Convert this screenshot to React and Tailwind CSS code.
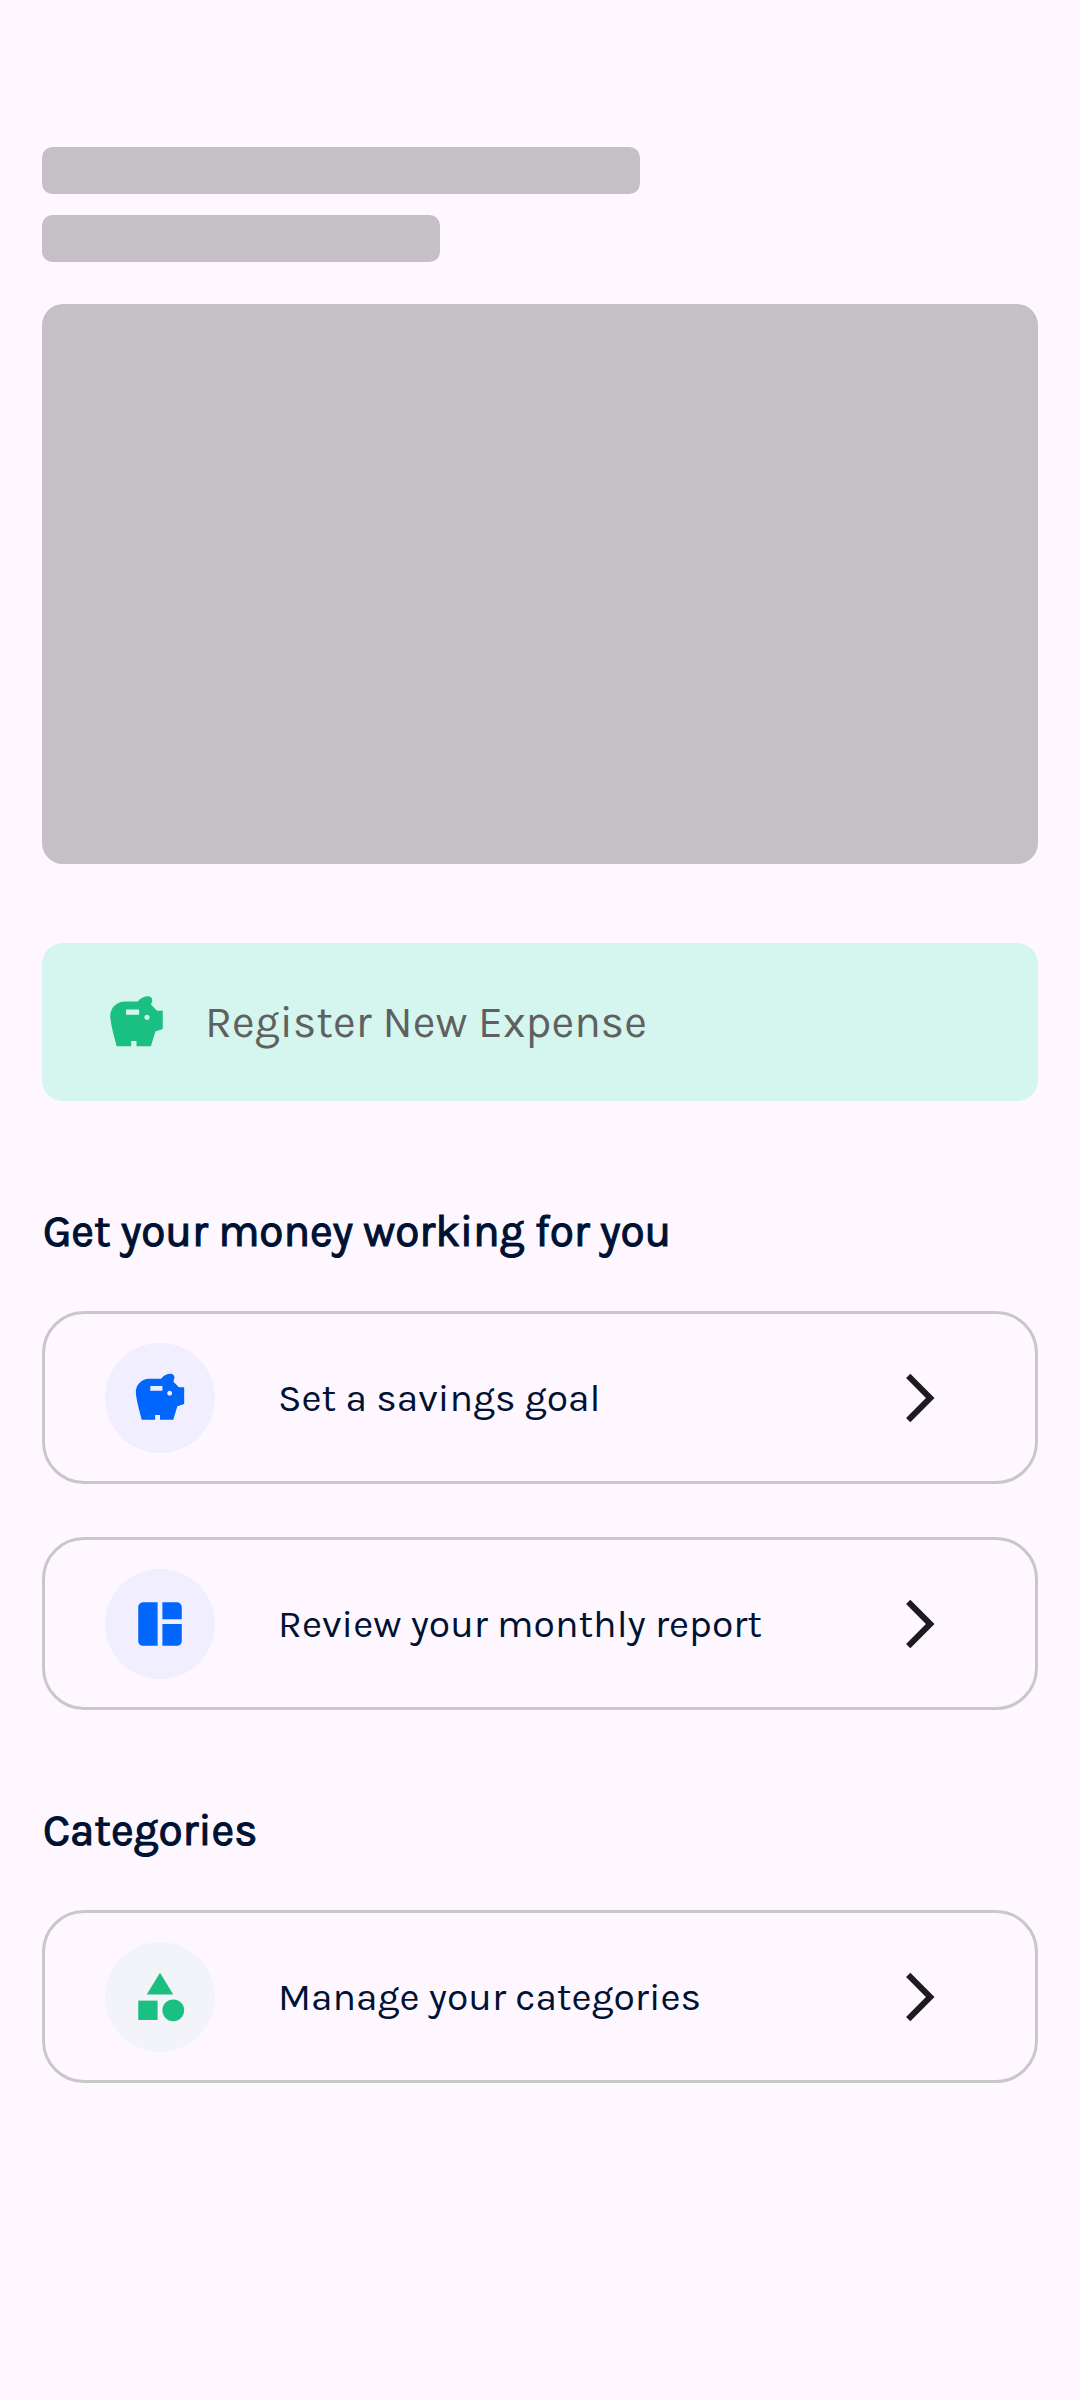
import { MdArrowForwardIos, MdCategory, MdSavings, MdSpaceDashboard } from "react-icons/md";

function ActionCard({ icon: Icon, label, iconClass, className }) {
  return (
    <button className={`flex h-[173px] w-full items-center rounded-[42px] border-3 border-[#c8c8c8] pl-[60px] text-left ${className}`}>
      <span className={`flex size-[110px] shrink-0 items-center justify-center rounded-full ${iconClass}`}>
        <Icon size={58} />
      </span>
      <span className="ml-[63px] flex-1 whitespace-nowrap text-[39px] leading-[46px] text-[#001233]">{label}</span>
      <MdArrowForwardIos size={58} className="mr-[86px] shrink-0 text-[#1d1b20]" />
    </button>
  );
}

function SectionTitle({ className, children }) {
  return (
    <h2 className={`h-[54px] pl-px whitespace-nowrap text-[44.1px] leading-[54px] text-[#001233] [-webkit-text-stroke:1.2px_#001233] ${className}`}>
      {children}
    </h2>
  );
}

export default function App() {
  return (
    <main className="flex h-[2400px] w-[1080px] flex-col bg-[#fef7ff] px-[42px] pt-[147px] font-['Karla','Open_Sans',sans-serif]">
      <div className="h-[47px] w-[598px] rounded-[10.5px] bg-[#c5c0c6]" />
      <div className="mt-[21px] h-[47px] w-[398px] rounded-[10.5px] bg-[#c5c0c6]" />
      <div className="mt-[42px] h-[560px] w-full rounded-[21px] bg-[#c5c0c6]" />

      <button className="mt-[79px] flex h-[158px] items-center rounded-[21px] bg-[#d4f6ee] pl-[63px] text-left">
        <MdSavings size={63} className="text-[#1abf82]" />
        <span className="mt-[2px] ml-[37px] whitespace-nowrap text-[44.1px] leading-[52px] tracking-[0.1px] text-[#606060]">
          Register New Expense
        </span>
      </button>

      <SectionTitle className="mt-[104px] tracking-[-0.07px]">Get your money working for you</SectionTitle>
      <ActionCard
        icon={MdSavings}
        label="Set a savings goal"
        iconClass="bg-[#f0eeff] text-[#0066fc]"
        className="mt-[52px]"
      />
      <ActionCard
        icon={MdSpaceDashboard}
        label="Review your monthly report"
        iconClass="bg-[#f0eeff] text-[#0066fc]"
        className="mt-[53px]"
      />

      <SectionTitle className="mt-[94px]">Categories</SectionTitle>
      <ActionCard
        icon={MdCategory}
        label="Manage your categories"
        iconClass="bg-[#f2f4f9] text-[#1abf82]"
        className="mt-[52px]"
      />
    </main>
  );
}
